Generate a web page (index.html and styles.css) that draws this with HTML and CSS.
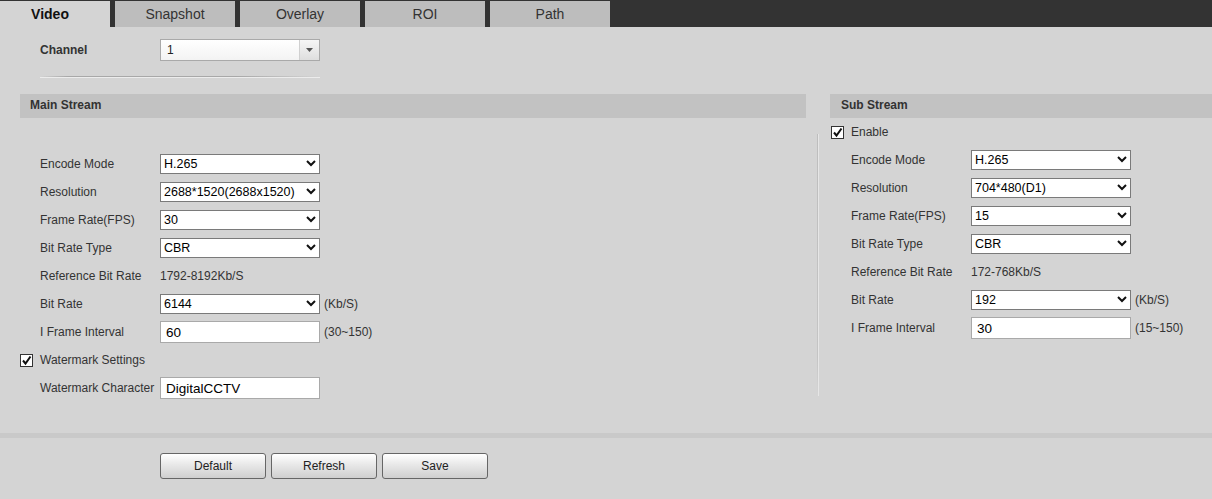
FILE: index.html
```html
<!DOCTYPE html>
<html lang="en">
<head>
    <meta charset="UTF-8">
    <meta name="viewport" content="width=device-width, initial-scale=1.0">
    <title>Video Settings</title>
    <link rel="stylesheet" href="styles.css">
</head>
<body>
    <div class="tabs">
        <div class="tab active">Video</div>
        <div class="tab">Snapshot</div>
        <div class="tab">Overlay</div>
        <div class="tab">ROI</div>
        <div class="tab">Path</div>
    </div>

    <div class="channel-row">
        <span class="channel-label">Channel</span>
        <div class="combo">
            <span class="combo-value">1</span>
            <span class="combo-btn">
                <svg width="7" height="4" viewBox="0 0 7 4"><path d="M0 0 L7 0 L3.5 4 Z" fill="#555"/></svg>
            </span>
        </div>
    </div>
    <div class="rule"></div>

    <div class="streams">
        <section class="stream main">
            <div class="stream-head">Main Stream</div>
            <div class="stream-body main-body">
                <div class="row">
                    <span class="label">Encode Mode</span>
                    <div class="select-wrap">
                        <select class="select"><option>H.265</option></select>
                        <svg class="chevron" width="10" height="7" viewBox="0 0 10 7"><path d="M1 1 L5 5 L9 1" fill="none" stroke="#111" stroke-width="2"/></svg>
                    </div>
                </div>
                <div class="row">
                    <span class="label">Resolution</span>
                    <div class="select-wrap">
                        <select class="select"><option>2688*1520(2688x1520)</option></select>
                        <svg class="chevron" width="10" height="7" viewBox="0 0 10 7"><path d="M1 1 L5 5 L9 1" fill="none" stroke="#111" stroke-width="2"/></svg>
                    </div>
                </div>
                <div class="row">
                    <span class="label">Frame Rate(FPS)</span>
                    <div class="select-wrap">
                        <select class="select"><option>30</option></select>
                        <svg class="chevron" width="10" height="7" viewBox="0 0 10 7"><path d="M1 1 L5 5 L9 1" fill="none" stroke="#111" stroke-width="2"/></svg>
                    </div>
                </div>
                <div class="row">
                    <span class="label">Bit Rate Type</span>
                    <div class="select-wrap">
                        <select class="select"><option>CBR</option></select>
                        <svg class="chevron" width="10" height="7" viewBox="0 0 10 7"><path d="M1 1 L5 5 L9 1" fill="none" stroke="#111" stroke-width="2"/></svg>
                    </div>
                </div>
                <div class="row">
                    <span class="label">Reference Bit Rate</span>
                    <span class="value">1792-8192Kb/S</span>
                </div>
                <div class="row">
                    <span class="label">Bit Rate</span>
                    <div class="select-wrap">
                        <select class="select"><option>6144</option></select>
                        <svg class="chevron" width="10" height="7" viewBox="0 0 10 7"><path d="M1 1 L5 5 L9 1" fill="none" stroke="#111" stroke-width="2"/></svg>
                    </div>
                    <span class="unit">(Kb/S)</span>
                </div>
                <div class="row">
                    <span class="label">I Frame Interval</span>
                    <input type="text" class="text-input" value="60">
                    <span class="unit">(30~150)</span>
                </div>
                <div class="row check-row">
                    <span class="checkbox">
                        <svg width="11" height="11" viewBox="0 0 11 11"><path d="M2 5.5 L4.5 8.5 L9.5 1.5" fill="none" stroke="#111" stroke-width="2"/></svg>
                    </span>
                    <span class="check-text">Watermark Settings</span>
                </div>
                <div class="row">
                    <span class="label">Watermark Character</span>
                    <input type="text" class="text-input" value="DigitalCCTV">
                </div>
            </div>
        </section>

        <div class="divider"></div>

        <section class="stream sub">
            <div class="stream-head">Sub Stream</div>
            <div class="stream-body sub-body">
                <div class="row check-row">
                    <span class="checkbox">
                        <svg width="11" height="11" viewBox="0 0 11 11"><path d="M2 5.5 L4.5 8.5 L9.5 1.5" fill="none" stroke="#111" stroke-width="2"/></svg>
                    </span>
                    <span class="check-text">Enable</span>
                </div>
                <div class="row">
                    <span class="label">Encode Mode</span>
                    <div class="select-wrap">
                        <select class="select"><option>H.265</option></select>
                        <svg class="chevron" width="10" height="7" viewBox="0 0 10 7"><path d="M1 1 L5 5 L9 1" fill="none" stroke="#111" stroke-width="2"/></svg>
                    </div>
                </div>
                <div class="row">
                    <span class="label">Resolution</span>
                    <div class="select-wrap">
                        <select class="select"><option>704*480(D1)</option></select>
                        <svg class="chevron" width="10" height="7" viewBox="0 0 10 7"><path d="M1 1 L5 5 L9 1" fill="none" stroke="#111" stroke-width="2"/></svg>
                    </div>
                </div>
                <div class="row">
                    <span class="label">Frame Rate(FPS)</span>
                    <div class="select-wrap">
                        <select class="select"><option>15</option></select>
                        <svg class="chevron" width="10" height="7" viewBox="0 0 10 7"><path d="M1 1 L5 5 L9 1" fill="none" stroke="#111" stroke-width="2"/></svg>
                    </div>
                </div>
                <div class="row">
                    <span class="label">Bit Rate Type</span>
                    <div class="select-wrap">
                        <select class="select"><option>CBR</option></select>
                        <svg class="chevron" width="10" height="7" viewBox="0 0 10 7"><path d="M1 1 L5 5 L9 1" fill="none" stroke="#111" stroke-width="2"/></svg>
                    </div>
                </div>
                <div class="row">
                    <span class="label">Reference Bit Rate</span>
                    <span class="value">172-768Kb/S</span>
                </div>
                <div class="row">
                    <span class="label">Bit Rate</span>
                    <div class="select-wrap">
                        <select class="select"><option>192</option></select>
                        <svg class="chevron" width="10" height="7" viewBox="0 0 10 7"><path d="M1 1 L5 5 L9 1" fill="none" stroke="#111" stroke-width="2"/></svg>
                    </div>
                    <span class="unit">(Kb/S)</span>
                </div>
                <div class="row">
                    <span class="label">I Frame Interval</span>
                    <input type="text" class="text-input" value="30">
                    <span class="unit">(15~150)</span>
                </div>
            </div>
        </section>
    </div>

    <div class="band"></div>

    <div class="actions">
        <button class="btn">Default</button>
        <button class="btn">Refresh</button>
        <button class="btn">Save</button>
    </div>
</body>
</html>
```

FILE: styles.css
```css
html, body {
    margin: 0;
    padding: 0;
    height: 100%;
    overflow: hidden;
}
body {
    background-color: #d4d4d4;
    font-family: "Liberation Sans", Arial, sans-serif;
    font-size: 12px;
    color: #333;
}
.tabs {
    display: flex;
    height: 26px;
    padding-top: 1px;
    background-color: #333;
}
.tab {
    width: 120px;
    height: 26px;
    margin-right: 5px;
    background-color: #bdbdbd;
    color: #333;
    font-size: 14px;
    line-height: 26px;
    text-align: center;
}
.tab:first-child {
    margin-left: -10px;
}
.tab.active {
    background-color: #d4d4d4;
    color: #111;
    font-weight: bold;
}
.channel-row {
    display: flex;
    align-items: center;
    height: 22px;
    margin-top: 12px;
    padding-left: 40px;
}
.channel-label {
    width: 120px;
    font-weight: bold;
    color: #333;
}
.combo {
    display: flex;
    width: 160px;
    height: 22px;
    box-sizing: border-box;
    border: 1px solid #a9a9a9;
    background: linear-gradient(#ffffff, #f3f3f3);
}
.combo-value {
    flex: 1;
    padding-left: 6px;
    line-height: 20px;
    font-size: 12px;
    color: #222;
}
.combo-btn {
    display: flex;
    align-items: center;
    justify-content: center;
    width: 19px;
    border-left: 1px solid #d0d0d0;
    background: linear-gradient(#f6f6f6, #dedede);
}
.rule {
    width: 280px;
    height: 1px;
    margin: 15px 0 0 40px;
    background: linear-gradient(to right, rgba(160,160,160,0), #a8a8a8 10%, #a8a8a8 70%, rgba(160,160,160,0));
    border-bottom: 1px solid #ececec;
}
.streams {
    display: flex;
    margin-top: 16px;
    padding-left: 20px;
}
.stream.main {
    width: 786px;
}
.stream.sub {
    flex: 1;
    margin-left: 11px;
}
.stream-head {
    height: 24px;
    line-height: 23px;
    padding-left: 10px;
    background-color: #c2c2c2;
    font-weight: bold;
    color: #333;
}
.sub .stream-head {
    padding-left: 11px;
}
.main-body {
    padding-top: 32px;
}
.sub-body {
    padding-left: 1px;
}
.divider {
    width: 1px;
    margin: 40px 0 0 11px;
    height: 262px;
    background: linear-gradient(#bdbdbd, #c4c4c4 85%, rgba(196,196,196,0));
    border-right: 1px solid #e6e6e6;
}
.row {
    display: flex;
    align-items: center;
    height: 28px;
    padding-left: 20px;
}
.label {
    width: 120px;
    color: #333;
    white-space: nowrap;
}
.value {
    color: #333;
}
.select-wrap {
    position: relative;
    width: 160px;
    height: 20px;
}
.select {
    appearance: none;
    -webkit-appearance: none;
    width: 160px;
    height: 20px;
    margin: 0;
    padding: 0 0 0 3px;
    border: 1px solid #7a7a7a;
    border-radius: 0;
    background-color: #fff;
    font-family: "Liberation Sans", Arial, sans-serif;
    font-size: 12.5px;
    color: #000;
}
.chevron {
    position: absolute;
    right: 4px;
    top: 6px;
    pointer-events: none;
}
.text-input {
    width: 160px;
    height: 22px;
    box-sizing: border-box;
    margin: 0;
    padding: 0 0 0 5px;
    border: 1px solid #a9a9a9;
    background-color: #fff;
    font-family: "Liberation Sans", Arial, sans-serif;
    font-size: 13.5px;
    color: #000;
}
.unit {
    margin-left: 4px;
    color: #333;
}
.check-row {
    padding-left: 0;
}
.checkbox {
    display: flex;
    align-items: center;
    justify-content: center;
    width: 13px;
    height: 13px;
    box-sizing: border-box;
    border: 1px solid #333;
    background-color: #fff;
}
.check-text {
    margin-left: 7px;
    color: #333;
}
.band {
    height: 5px;
    margin-top: 31px;
    background-color: #c9c9c9;
}
.actions {
    display: flex;
    gap: 5px;
    margin-top: 15px;
    padding-left: 160px;
}
.btn {
    width: 106px;
    height: 26px;
    padding: 0;
    border: 1px solid #666;
    border-radius: 3px;
    background: linear-gradient(#ffffff, #e8e8e8 45%, #cfcfcf);
    font-family: "Liberation Sans", Arial, sans-serif;
    font-size: 12px;
    color: #222;
    cursor: pointer;
}
```
